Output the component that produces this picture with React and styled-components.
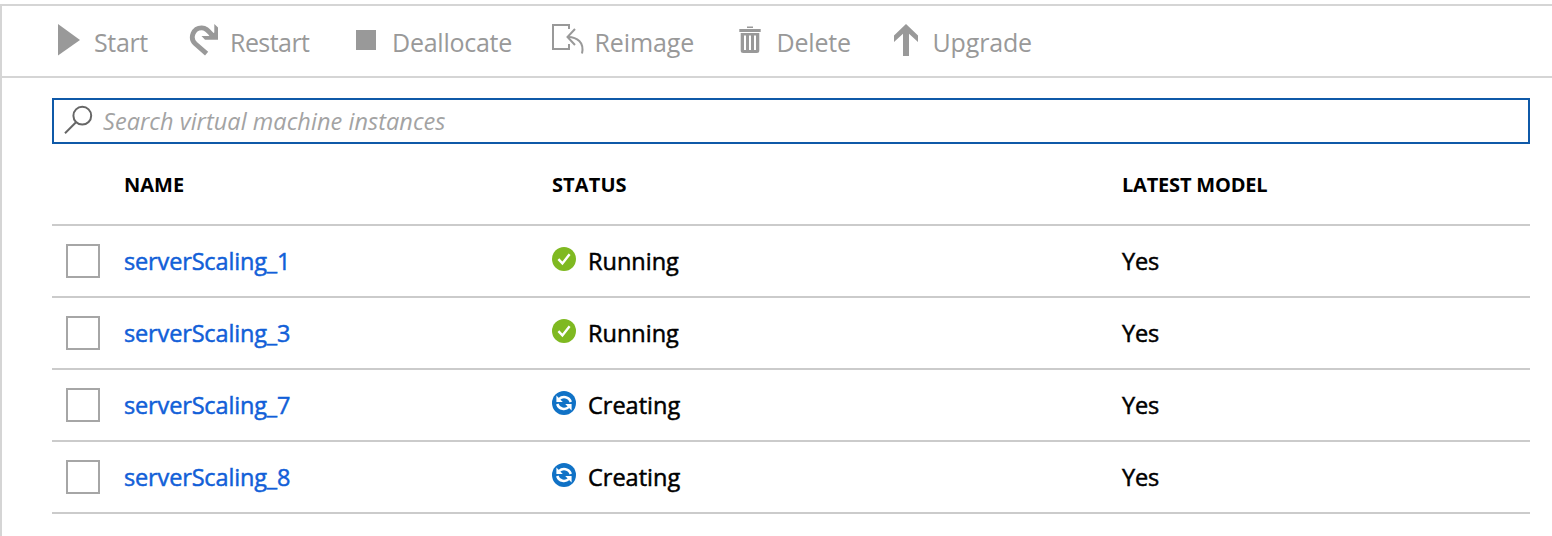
import React from "react";
import styled, { createGlobalStyle } from "styled-components";

const GlobalStyle = createGlobalStyle`
  * { box-sizing: border-box; }
  html, body { margin: 0; background: #fff; }
  body { font-family: "Open Sans", "Noto Sans", sans-serif; color: #000; }
`;

const Panel = styled.main`
  margin-top: 4px;
  height: 532px;
  border-top: 2px solid #d5d5d5;
  border-left: 2px solid #d5d5d5;
  overflow: hidden;
`;

const Toolbar = styled.div`
  display: flex;
  height: 72px;
  padding-left: 52px;
  border-bottom: 2px solid #d5d5d5;
`;

const Command = styled.button`
  display: flex;
  flex: 0 0 ${(p) => p.$width}px;
  padding: 0;
  border: 0;
  background: none;
  color: #999;
  font: inherit;
  text-align: left;
`;

const CommandIcon = styled.span`
  flex: 0 0 ${(p) => p.$width}px;
  padding-top: 16px;
  line-height: 0;
`;

const CommandLabel = styled.span`
  padding-top: 19px;
  font-size: 25px;
  line-height: 34px;
  letter-spacing: ${(p) => p.$tracking}px;
  white-space: nowrap;
`;

const SearchBox = styled.label`
  display: flex;
  height: 46px;
  margin: 20px 22px 0 50px;
  padding-left: 10px;
  border: 2px solid #0f59a8;
`;

const SearchInput = styled.input`
  flex: 1;
  padding: 0 0 0 7px;
  border: 0;
  outline: 0;
  background: none;
  font-family: inherit;
  font-size: 23.5px;
  font-style: italic;
  letter-spacing: 0.05px;
  &::placeholder { color: #a3a3a3; opacity: 1; }
`;

const Table = styled.div`
  margin: 0 22px 0 50px;
`;

const Row = styled.div`
  display: grid;
  grid-template-columns: 72px 428px 570px 1fr;
  align-items: center;
  height: 72px;
  border-bottom: 2px solid #cbcbcb;
`;

const HeaderRow = styled(Row)`
  height: 82px;
  padding-top: 2px;
`;

const HeaderCell = styled.span`
  font-size: 20px;
  font-weight: 700;
  line-height: 26px;
  letter-spacing: ${(p) => p.$tracking}px;
`;

const Checkbox = styled.span`
  width: 34px;
  height: 34px;
  margin-left: 14px;
  border: 2px solid #a6a6a6;
`;

const Cell = styled.span`
  display: flex;
  font-size: 23.5px;
  line-height: 32px;
  letter-spacing: ${(p) => p.$tracking || 0}px;
  -webkit-text-stroke: 0.5px currentColor;
`;

const NameLink = styled(Cell).attrs({ as: "a", href: "#" })`
  color: #125fd8;
  text-decoration: none;
`;

const StatusIcon = styled.svg`
  width: 24px;
  height: 24px;
  margin: 2px 12px 0 0;
`;

const StartIcon = () => (
  <svg width="32" height="36" fill="currentColor"><path d="M4 2 26 18 4 33.6Z" /></svg>
);

const RestartIcon = () => (
  <svg width="32" height="36">
    <path d="M18.6 31.6 7.3 21.7A9.2 9.2 0 0 1 13.8 5.8C18.5 5.8 20.2 8.8 25.5 14.5" fill="none" stroke="currentColor" strokeWidth="4.8" />
    <path d="M26.3 2 30 5.5V17.8H17L13.5 14H20.5L26.3 10.5Z" fill="currentColor" />
  </svg>
);

const DeallocateIcon = () => (
  <svg width="32" height="36"><path d="M4 8H24V28H4Z" fill="currentColor" /></svg>
);

const ReimageIcon = () => (
  <svg width="36" height="36" fill="none" stroke="currentColor" strokeWidth="2">
    <path d="M17 7V3H1V27H17V22" />
    <path d="M23 7 15.5 15 23 23" />
    <path d="M16 15C25 15.2 32.5 20 30 31.5" />
  </svg>
);

const DeleteIcon = () => (
  <svg width="32" height="36">
    <path d="M9 4.5H15V6H9ZM1.3 7H22.7V10H1.3ZM2.7 11H21.3V28.5Q21.3 31 18.8 31H5.2Q2.7 31 2.7 28.5Z" fill="currentColor" />
    <path d="M7 13.5V28M12 13.5V28M17 13.5V28" stroke="#fff" strokeWidth="2" />
  </svg>
);

const UpgradeIcon = () => (
  <svg width="32" height="36" fill="currentColor">
    <path d="M14 2 26 13.5V20L17 11.8V34H11V11.8L2 20V13.5Z" />
  </svg>
);

const SearchIcon = () => (
  <svg width="32" height="42" fill="none" stroke="#666" strokeWidth="2">
    <circle cx="18.3" cy="15.7" r="8.9" />
    <path d="M12 22.3 1 33.3" />
  </svg>
);

const RunningIcon = () => (
  <StatusIcon viewBox="0 0 24 24">
    <circle cx="12" cy="12" r="12" fill="#7fb921" />
    <path d="M6.4 12.2 10.4 16.4 17.6 7.2" fill="none" stroke="#fff" strokeWidth="2.4" />
  </StatusIcon>
);

const CreatingIcon = () => (
  <StatusIcon viewBox="0 0 24 24">
    <circle cx="12" cy="12" r="12" fill="#1072c6" />
    <g fill="none" stroke="#fff" strokeWidth="2.5">
      <path d="M7 8.2C10.5 4.8 17 5.5 18.8 11" />
      <path d="M17 15.8C13.5 19.2 7 18.5 5.2 13" />
    </g>
    <path d="M4.4 4.6V10.9H10.8ZM19.6 19.4V13.1H13.2Z" fill="#fff" />
  </StatusIcon>
);

const commands = [
  { label: "Start", Icon: StartIcon, width: 134, slot: 40, tracking: -0.35 },
  { label: "Restart", Icon: RestartIcon, width: 164, slot: 42, tracking: -0.55 },
  { label: "Deallocate", Icon: DeallocateIcon, width: 200, slot: 40, tracking: -0.25 },
  { label: "Reimage", Icon: ReimageIcon, width: 186, slot: 42.5, tracking: -0.1 },
  { label: "Delete", Icon: DeleteIcon, width: 154, slot: 38.5, tracking: -0.2 },
  { label: "Upgrade", Icon: UpgradeIcon, width: 150, slot: 40.5, tracking: -0.15 },
];

const instances = [
  { name: "serverScaling_1", status: "Running" },
  { name: "serverScaling_3", status: "Running" },
  { name: "serverScaling_7", status: "Creating" },
  { name: "serverScaling_8", status: "Creating" },
];

export default function App() {
  return (
    <Panel>
      <GlobalStyle />
      <Toolbar>
        {commands.map(({ label, Icon, width, slot, tracking }) => (
          <Command key={label} $width={width}>
            <CommandIcon $width={slot}><Icon /></CommandIcon>
            <CommandLabel $tracking={tracking}>{label}</CommandLabel>
          </Command>
        ))}
      </Toolbar>
      <SearchBox>
        <SearchIcon />
        <SearchInput placeholder="Search virtual machine instances" />
      </SearchBox>
      <Table>
        <HeaderRow>
          <span />
          <HeaderCell $tracking={0}>NAME</HeaderCell>
          <HeaderCell $tracking={0.1}>STATUS</HeaderCell>
          <HeaderCell $tracking={-0.2}>LATEST MODEL</HeaderCell>
        </HeaderRow>
        {instances.map(({ name, status }) => (
          <Row key={name}>
            <Checkbox />
            <NameLink $tracking={-0.15}>{name}</NameLink>
            <Cell>
              {status === "Running" ? <RunningIcon /> : <CreatingIcon />}
              {status}
            </Cell>
            <Cell $tracking={-0.2}>Yes</Cell>
          </Row>
        ))}
      </Table>
    </Panel>
  );
}
